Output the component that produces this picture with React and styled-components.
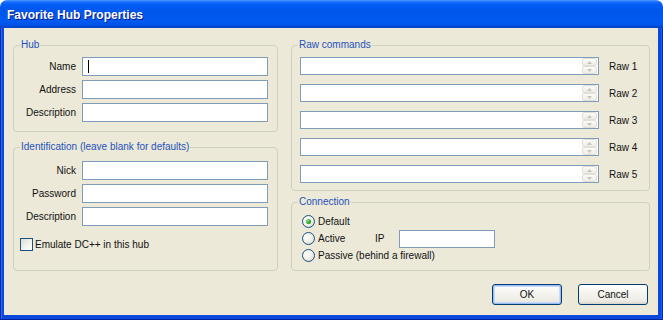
import { Fragment } from "react";
import styled, { createGlobalStyle } from "styled-components";

const GlobalStyle = createGlobalStyle`
  html, body {
    margin: 0;
    padding: 0;
    background: #ffffff;
  }
  body {
    font-family: "Liberation Sans", Arial, sans-serif;
    font-size: 10px;
    color: #111;
  }
`;

const Window = styled.div`
  width: 663px;
  height: 320px;
  display: flex;
  flex-direction: column;
  border-radius: 7px 7px 0 0;
  overflow: hidden;
`;

const TitleBar = styled.div`
  height: 28px;
  flex-shrink: 0;
  display: flex;
  align-items: center;
  padding: 1px 0 0 7px;
  box-sizing: border-box;
  background: linear-gradient(
    180deg,
    #4a9bff 0%,
    #1a6cff 7%,
    #005cf3 18%,
    #0056ea 45%,
    #005bf2 75%,
    #0052e4 90%,
    #003fc2 100%
  );
  color: #fff;
  font-weight: bold;
  font-size: 12px;
  text-shadow: 1px 1px 0 #0a1a8a;
`;

const Frame = styled.div`
  flex: 1;
  display: flex;
  padding: 0 5px 5px 4px;
  background: #0a48dc;
  box-shadow: inset 1px 0 0 #0029b0, inset -1px 0 0 #0029b0,
    inset 0 -1px 0 #00219a, inset 2px 0 0 #2a6cf0, inset -2px 0 0 #1a5ce6;
`;

const Body = styled.div`
  flex: 1;
  display: flex;
  flex-direction: column;
  background: #ece9d8;
  padding: 11px 8px 10px 9px;
`;

const Columns = styled.div`
  display: flex;
  gap: 13px;
  height: 232px;
`;

const Column = styled.div`
  width: ${(p) => p.$width}px;
  display: flex;
  flex-direction: column;
  gap: ${(p) => p.$gap}px;
`;

const Group = styled.fieldset`
  margin: 0;
  min-width: 0;
  border: 1px solid #d0d0bf;
  border-radius: 4px;
  padding: ${(p) => p.$pad};
  flex: ${(p) => (p.$grow ? 1 : "none")};
`;

const Legend = styled.legend`
  padding: 0 1px;
  line-height: 12px;
  color: #1f52bd;
`;

const FormGrid = styled.div`
  display: grid;
  grid-template-columns: 56px 1fr;
  column-gap: 6px;
  row-gap: ${(p) => p.$rowGap}px;
  align-items: center;
`;

const FieldLabel = styled.span`
  text-align: right;
  white-space: nowrap;
`;

const TextBox = styled.div`
  height: ${(p) => p.$h || 19}px;
  width: ${(p) => (p.$w ? `${p.$w}px` : "auto")};
  box-sizing: border-box;
  border: 1px solid #7f9db9;
  background: #fff;
  display: flex;
  align-items: center;
  justify-content: space-between;
  padding-left: 5px;
`;

const Caret = styled.span`
  width: 1px;
  height: 13px;
  background: #000;
`;

const CheckRow = styled.label`
  display: flex;
  align-items: center;
  gap: 2px;
  margin-top: 12px;
  height: 13px;
`;

const CheckBox = styled.span`
  width: 11px;
  height: 11px;
  border: 1px solid #1c5180;
  background: linear-gradient(135deg, #dcdcd4 0%, #f4f4f0 60%, #ffffff 100%);
`;

const RawList = styled.div`
  display: grid;
  grid-template-columns: 1fr 40px;
  column-gap: 10px;
  row-gap: 9px;
  align-items: center;
  padding-left: 2px;
`;

const Spinner = styled.div`
  width: 15px;
  height: 16px;
  display: flex;
  flex-direction: column;
  margin-right: 1px;
`;

const SpinButton = styled.div`
  flex: 1;
  box-sizing: border-box;
  border: 1px solid #e2e0d6;
  border-radius: 2px;
  background: linear-gradient(180deg, #fbfbf9, #eeede6);
  display: flex;
  align-items: center;
  justify-content: center;
`;

const OptionList = styled.div`
  display: flex;
  flex-direction: column;
  padding: 5px 0 0 4px;
`;

const OptionRow = styled.div`
  display: flex;
  align-items: center;
  height: 17px;
`;

const Option = styled.label`
  display: flex;
  align-items: center;
  gap: 3px;
  width: ${(p) => (p.$width ? `${p.$width}px` : "auto")};
  white-space: nowrap;
`;

const Radio = styled.span`
  width: 11px;
  height: 11px;
  border-radius: 50%;
  border: 1px solid #1c5180;
  background: radial-gradient(circle at 35% 35%, #ffffff 0%, #f2f1ea 45%, #d4d2c4 100%);
  display: flex;
  align-items: center;
  justify-content: center;

  &::after {
    content: "";
    width: 5px;
    height: 5px;
    border-radius: 50%;
    background: radial-gradient(circle at 35% 35%, #8ee08a, #21a121 60%, #1a8a1a);
    display: ${(p) => (p.$checked ? "block" : "none")};
  }
`;

const IpLabel = styled.span`
  width: 24px;
`;

const ButtonRow = styled.div`
  display: flex;
  justify-content: flex-end;
  gap: 16px;
  margin-top: 13px;
  padding-right: 2px;
`;

const Button = styled.button`
  width: 70px;
  height: 21px;
  padding: 0;
  font-family: inherit;
  font-size: 10px;
  color: #111;
  border: 1px solid #003c74;
  border-radius: 3px;
  background: linear-gradient(180deg, #ffffff 0%, #f5f4ef 40%, #ecebe4 85%, #d8d2c6 100%);
  box-shadow: ${(p) =>
    p.$default
      ? "inset 0 0 0 1px #9fbcef, inset 0 0 0 2px #c6dafc"
      : "none"};
`;

const Arrow = ({ up }) => (
  <svg width="5" height="3" viewBox="0 0 5 3">
    <polygon points={up ? "0,3 5,3 2.5,0" : "0,0 5,0 2.5,3"} fill="#c7c5b9" />
  </svg>
);

const RawBox = () => (
  <TextBox $h={18}>
    <span />
    <Spinner>
      <SpinButton>
        <Arrow up />
      </SpinButton>
      <SpinButton>
        <Arrow />
      </SpinButton>
    </Spinner>
  </TextBox>
);

const hubFields = ["Name", "Address", "Description"];
const idFields = ["Nick", "Password", "Description"];
const raws = [1, 2, 3, 4, 5];

export default function App() {
  return (
    <>
      <GlobalStyle />
      <Window>
        <TitleBar>Favorite Hub Properties</TitleBar>
        <Frame>
          <Body>
            <Columns>
              <Column $width={265} $gap={9}>
                <Group $pad="6px 9px 9px 6px">
                  <Legend>Hub</Legend>
                  <FormGrid $rowGap={4}>
                    {hubFields.map((f) => (
                      <Fragment key={f}>
                        <FieldLabel>{f}</FieldLabel>
                        <TextBox>{f === "Name" && <Caret />}</TextBox>
                      </Fragment>
                    ))}
                  </FormGrid>
                </Group>
                <Group $pad="8px 9px 9px 6px" $grow>
                  <Legend>Identification (leave blank for defaults)</Legend>
                  <FormGrid $rowGap={4}>
                    {idFields.map((f) => (
                      <Fragment key={f}>
                        <FieldLabel>{f}</FieldLabel>
                        <TextBox />
                      </Fragment>
                    ))}
                  </FormGrid>
                  <CheckRow>
                    <CheckBox />
                    Emulate DC++ in this hub
                  </CheckRow>
                </Group>
              </Column>
              <Column $width={359} $gap={5}>
                <Group $pad="6px 0 7px 6px">
                  <Legend>Raw commands</Legend>
                  <RawList>
                    {raws.map((n) => (
                      <Fragment key={n}>
                        <RawBox />
                        <span>Raw {n}</span>
                      </Fragment>
                    ))}
                  </RawList>
                </Group>
                <Group $pad="0 0 0 6px" $grow>
                  <Legend>Connection</Legend>
                  <OptionList>
                    <OptionRow>
                      <Option>
                        <Radio $checked />
                        Default
                      </Option>
                    </OptionRow>
                    <OptionRow>
                      <Option $width={73}>
                        <Radio />
                        Active
                      </Option>
                      <IpLabel>IP</IpLabel>
                      <TextBox $w={96} $h={18} />
                    </OptionRow>
                    <OptionRow>
                      <Option>
                        <Radio />
                        Passive (behind a firewall)
                      </Option>
                    </OptionRow>
                  </OptionList>
                </Group>
              </Column>
            </Columns>
            <ButtonRow>
              <Button $default>OK</Button>
              <Button>Cancel</Button>
            </ButtonRow>
          </Body>
        </Frame>
      </Window>
    </>
  );
}
